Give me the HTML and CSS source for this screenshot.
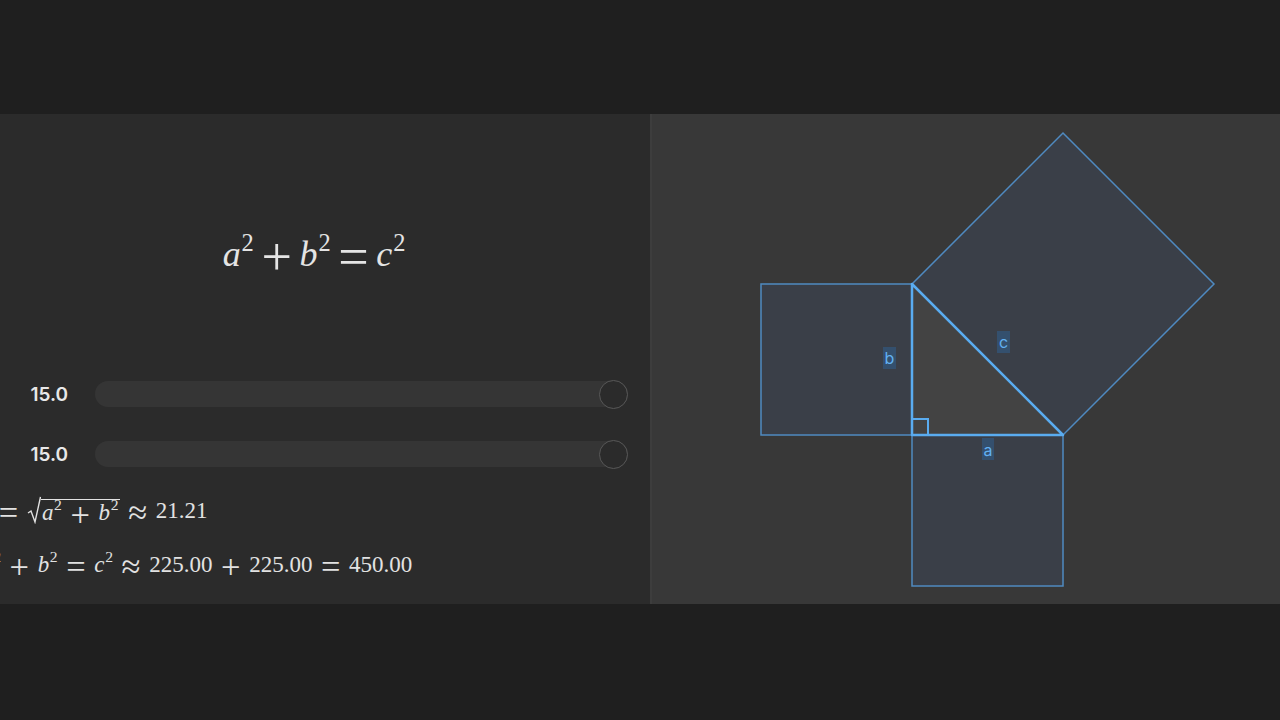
FILE: index.html
```html
<!DOCTYPE html>
<html>
<head>
<meta charset="utf-8">
<link rel="stylesheet" href="styles.css">
</head>
<body>
<div class="top"></div>
<main class="panel">
  <section class="left">
    <div class="left-inner">
      <div class="formula-main"><i>a</i><sup>2</sup><span class="op">+</span><i>b</i><sup>2</sup><span class="op">=</span><i>c</i><sup>2</sup></div>
      <div class="sliders">
        <div class="slider-row">
          <span class="val">15.0</span>
          <div class="track"><span class="thumb"></span></div>
        </div>
        <div class="slider-row">
          <span class="val">15.0</span>
          <div class="track"><span class="thumb"></span></div>
        </div>
      </div>
      <div class="result r1"><i>c</i><span class="op">=</span><span class="sqrt"><svg class="rad-sign" viewBox="0 0 14 28" width="14" height="28"><polyline points="1,17 4,15 8,26 13.5,1"/></svg><span class="rad"><i>a</i><sup>2</sup><span class="op">+</span><i>b</i><sup>2</sup></span></span><span class="op">≈</span>21.21</div>
      <div class="result r2"><i>a</i><sup>2</sup><span class="op">+</span><i>b</i><sup>2</sup><span class="op">=</span><i>c</i><sup>2</sup><span class="op">≈</span>225.00<span class="op">+</span>225.00<span class="op">=</span>450.00</div>
    </div>
  </section>
  <div class="divider"></div>
  <section class="right">
    <svg class="diagram" viewBox="652 114 628 490" width="628" height="490">
      <g class="sq">
        <rect x="761" y="284" width="151" height="151"/>
        <rect x="912" y="435" width="151" height="151"/>
        <polygon points="912,284 1063,435 1214,284 1063,133"/>
      </g>
      <polygon class="tri" points="912,284 912,435 1063,435"/>
      <polyline class="ra" points="912,419 928,419 928,435"/>
      <g class="lbl">
        <rect x="883" y="347" width="13" height="22"/>
        <text x="889.5" y="364">b</text>
        <rect x="997" y="331" width="13" height="22"/>
        <text x="1003.5" y="348">c</text>
        <rect x="982" y="438" width="12" height="22"/>
        <text x="988" y="456">a</text>
      </g>
    </svg>
  </section>
</main>
</body>
</html>
```
FILE: styles.css
```css
html, body {
  margin: 0;
  padding: 0;
  background: #1f1f1f;
  width: 1280px;
  height: 720px;
  overflow: hidden;
}
.top {
  height: 114px;
}
.panel {
  display: flex;
  height: 490px;
}
.left {
  width: 650px;
  background: #2b2b2b;
  overflow: hidden;
  color: #e4e4e4;
  font-family: "Liberation Serif", "DejaVu Serif", serif;
}
.left-inner {
  margin-left: -22px;
  width: 672px;
  display: flex;
  flex-direction: column;
}
.formula-main {
  margin-top: 112px;
  height: 56px;
  text-align: center;
  font-size: 36px;
  line-height: 56px;
}
.op {
  font-size: 1.5em;
  line-height: 0;
  vertical-align: -0.17em;
}
.formula-main .op {
  margin: 0 0.14em;
}
.result .op {
  margin: 0 0.25em;
}
i {
  font-style: italic;
}
sup {
  font-size: 0.68em;
  line-height: 0;
  vertical-align: 0.62em;
  margin-left: 0.04em;
}
.sliders {
  margin-top: 97px;
  display: flex;
  flex-direction: column;
  gap: 30px;
}
.slider-row {
  display: flex;
  align-items: center;
  height: 30px;
}
.val {
  width: 90px;
  text-align: right;
  font-family: Inter, "Noto Sans", sans-serif;
  font-size: 19px;
  font-weight: 600;
  color: #e8e8e8;
  letter-spacing: 0;
}
.track {
  margin-left: 27px;
  width: 533px;
  height: 26px;
  border-radius: 13px;
  background: #353535;
  display: flex;
  justify-content: flex-end;
  align-items: center;
}
.thumb {
  width: 27px;
  height: 27px;
  border-radius: 50%;
  border: 1.5px solid #585858;
  background: #2b2b2b;
  box-sizing: content-box;
}
.result {
  font-size: 23px;
  line-height: 30px;
  white-space: nowrap;
  color: #e2e2e2;
}
.r1 {
  margin-top: 27px;
  margin-left: 2px;
}
.r2 {
  margin-top: 24px;
  margin-left: 3px;
}
.sqrt {
  display: inline-flex;
  align-items: flex-start;
  vertical-align: -6px;
}
.rad-sign {
  display: block;
  margin-top: -3px;
}
.rad-sign polyline {
  fill: none;
  stroke: #e2e2e2;
  stroke-width: 1.4;
}
.rad {
  border-top: 1.4px solid #e2e2e2;
  line-height: 26px;
  padding: 0 1px;
}
.divider {
  width: 2px;
  background: #3d3d3d;
}
.right {
  flex: 1;
  background: #383838;
}
.diagram {
  display: block;
}
.sq rect, .sq polygon {
  fill: #3a3f48;
  stroke: #4f8ac0;
  stroke-width: 1.5;
}
.tri {
  fill: #434343;
  stroke: #5aacf0;
  stroke-width: 2.5;
  stroke-linejoin: round;
}
.ra {
  fill: none;
  stroke: #5aacf0;
  stroke-width: 2;
}
.lbl rect {
  fill: #34506e;
}
.lbl text {
  fill: #62b0f2;
  font-family: Inter, "Noto Sans", sans-serif;
  font-size: 16px;
  text-anchor: middle;
}
```
